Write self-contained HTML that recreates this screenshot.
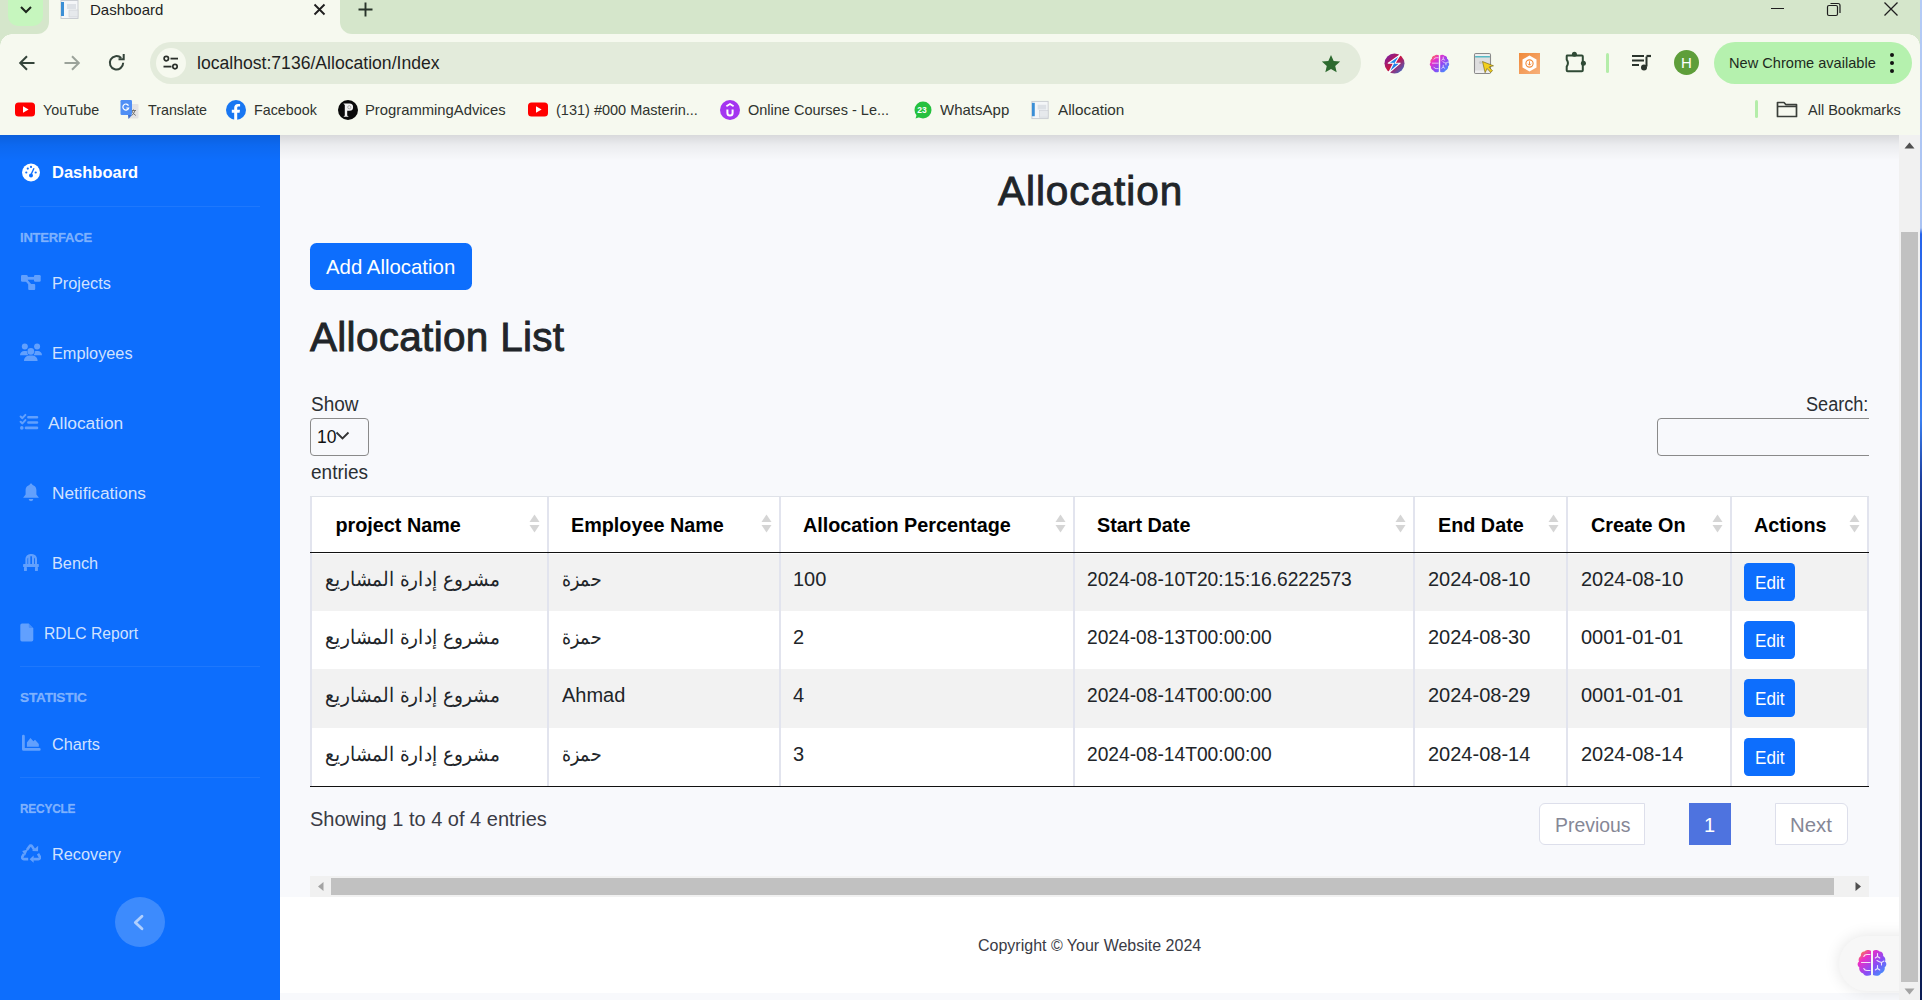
<!DOCTYPE html>
<html><head><meta charset="utf-8"><title>Dashboard</title>
<style>
*{box-sizing:border-box;margin:0;padding:0}
html,body{width:1922px;height:1000px;overflow:hidden;background:linear-gradient(#b4cbf6 0,#a9c2f2 228px,#2563eb 234px,#3b7ff0 420px,#1d3f9e 480px,#0c1f5a 560px,#0c1d55 1000px);font-family:"Liberation Sans",sans-serif}
.a{position:absolute}
.t{position:absolute;line-height:1;white-space:nowrap}
#win{position:absolute;left:0;top:0;width:1920px;height:1000px;overflow:hidden;background:#f8f9fc}
</style></head><body>
<div id="win">
<!-- ===== CHROME ===== -->
<div class="a" style="left:0;top:0;width:1920px;height:135px;background:#f6f9ef"></div>
<div class="a" style="left:0;top:0;width:49px;height:34px;background:#d5e6cb;border-bottom-right-radius:12px"></div>
<div class="a" style="left:340px;top:0;width:1580px;height:34px;background:#d5e6cb;border-bottom-left-radius:12px"></div>
<div class="a" style="left:0;top:34px;width:12px;height:12px;background:radial-gradient(circle at 12px 12px,transparent 11.5px,#d5e6cb 12px)"></div>
<div class="a" style="left:1908px;top:34px;width:12px;height:12px;background:radial-gradient(circle at 0 12px,transparent 11.5px,#d5e6cb 12px)"></div>
<div class="a" style="left:8px;top:-10px;width:35px;height:36px;background:#c6f6be;border-radius:10px"></div>
<svg class="a" style="left:18px;top:4px" width="16" height="12" viewBox="0 0 16 12"><path d="M3 3l5 5 5-5" fill="none" stroke="#1c261c" stroke-width="2"/></svg>
<!-- tab -->
<svg class="a" style="left:59px;top:0px" width="22" height="19" viewBox="0 0 22 19"><rect x="2" y="0.5" width="17" height="18" fill="#f4f6f8" stroke="#c9cdd2"/><rect x="2" y="2" width="3" height="14" fill="#3b8fd6"/><rect x="8" y="4" width="9" height="5" fill="#dde1e6"/><rect x="10" y="10" width="9" height="7" fill="#e6e9ec" stroke="#c9cdd2" stroke-width="0.6"/></svg>
<div class="t" style="left:90px;top:2px;font-size:15px;color:#1f1f1f">Dashboard</div>
<svg class="a" style="left:312px;top:2px" width="15" height="15" viewBox="0 0 15 15"><path d="M2.5 2.5l10 10M12.5 2.5l-10 10" stroke="#1f1f1f" stroke-width="1.9"/></svg>
<svg class="a" style="left:357px;top:1px" width="17" height="17" viewBox="0 0 17 17"><path d="M8.5 1.5v14M1.5 8.5h14" stroke="#28342a" stroke-width="1.9"/></svg>
<!-- window controls -->
<div class="a" style="left:1771px;top:8px;width:12.5px;height:1.4px;background:#1f1f1f"></div>
<svg class="a" style="left:1826px;top:1px" width="16" height="16" viewBox="0 0 16 16"><rect x="1.5" y="4.5" width="10" height="10" rx="1.5" fill="none" stroke="#1f1f1f" stroke-width="1.2"/><path d="M4.5 2.5h7.5a2 2 0 0 1 2 2v7.5" fill="none" stroke="#1f1f1f" stroke-width="1.2"/></svg>
<svg class="a" style="left:1883px;top:1px" width="16" height="16" viewBox="0 0 16 16"><path d="M1.5 1.5l13 13M14.5 1.5l-13 13" stroke="#1f1f1f" stroke-width="1.3"/></svg>
<!-- nav buttons -->
<svg class="a" style="left:17px;top:53px" width="20" height="20" viewBox="0 0 20 20"><path d="M17.5 10H3.5M10 3.2L3.2 10 10 16.8" fill="none" stroke="#34443a" stroke-width="2"/></svg>
<svg class="a" style="left:62px;top:53px" width="20" height="20" viewBox="0 0 20 20"><path d="M2.5 10h14M10 3.2l6.8 6.8L10 16.8" fill="none" stroke="#9ba39a" stroke-width="2"/></svg>
<svg class="a" style="left:107px;top:53px" width="20" height="20" viewBox="0 0 20 20"><path d="M16.2 9.8a6.7 6.7 0 1 1-2-4.8" fill="none" stroke="#34443a" stroke-width="2"/><path d="M11.5 6.2h5.2V1" fill="none" stroke="#34443a" stroke-width="2"/></svg>
<!-- omnibox -->
<div class="a" style="left:150px;top:42px;width:1211px;height:42px;background:#e3ebdb;border-radius:21px"></div>
<div class="a" style="left:156px;top:48px;width:30px;height:30px;background:#f6f9ef;border-radius:50%"></div>
<svg class="a" style="left:162px;top:54px" width="18" height="18" viewBox="0 0 18 18"><circle cx="4.3" cy="4.6" r="2.2" fill="none" stroke="#2a2f2a" stroke-width="1.7"/><path d="M8.5 4.6h7.5" stroke="#2a2f2a" stroke-width="1.8"/><circle cx="13" cy="12.6" r="2.2" fill="none" stroke="#2a2f2a" stroke-width="1.7"/><path d="M1.5 12.6h8" stroke="#2a2f2a" stroke-width="1.8"/></svg>
<div class="t" style="left:197px;top:55px;font-size:17.6px;color:#1f1f1f">localhost:7136/Allocation/Index</div>
<svg class="a" style="left:1320px;top:53px" width="22" height="22" viewBox="0 0 24 24"><path d="M12 2.2l2.9 6.6 7.1.6-5.4 4.7 1.6 7-6.2-3.7-6.2 3.7 1.6-7L2 9.4l7.1-.6z" fill="#2d6a2f"/></svg>
<!-- extension icons -->
<svg class="a" style="left:1384px;top:53px" width="21" height="21" viewBox="0 0 21 21"><defs><linearGradient id="g1" x1="0" y1="0" x2="1" y2="1"><stop offset="0" stop-color="#6a1fb8"/><stop offset=".5" stop-color="#c8183e"/><stop offset=".55" stop-color="#b61a5a"/><stop offset="1" stop-color="#1f7fe0"/></linearGradient><linearGradient id="g1b" x1="0" y1="0" x2="1" y2="1"><stop offset="0" stop-color="#17a4f0"/><stop offset="1" stop-color="#2a5de0"/></linearGradient></defs><circle cx="10.5" cy="10.5" r="10" fill="url(#g1)"/><path d="M16.2 1.8L4.2 10.2h5.3L4.6 20l11.6-9.8h-5.2z" fill="url(#g1b)" stroke="#fff" stroke-width="1.1" stroke-linejoin="round"/></svg>
<svg class="a" style="left:1429px;top:54px" width="21" height="19" viewBox="0 0 30 28"><defs><linearGradient id="g2" x1="0" y1="0" x2="1" y2="1"><stop offset="0" stop-color="#ff9a1a"/><stop offset=".28" stop-color="#ea2fc8"/><stop offset=".6" stop-color="#8a4cf5"/><stop offset="1" stop-color="#2ea4ff"/></linearGradient></defs><path fill="url(#g2)" d="M14 2C12.5 .5 9 .5 7.5 2.5 5 2.5 3.5 4.5 3.8 7 1.5 8.5 1.2 11 2 12.5 0 14 .3 17 2.3 18.2 1.8 21 3.5 23.5 6 24.2 7 26.8 11 27.5 14 26zM16 2C17.5 .5 21 .5 22.5 2.5 25 2.5 26.5 4.5 26.2 7 28.5 8.5 28.8 11 28 12.5 30 14 29.7 17 27.7 18.2 28.2 21 26.5 23.5 24 24.2 23 26.8 19 27.5 16 26z"/><g fill="none" stroke="#fff" stroke-width="1.3" opacity=".75" stroke-linecap="round"><path d="M6.8 7.5Q7.5 5.5 10 5.5H13"/><path d="M4.5 13.5H13"/><path d="M6.8 19.5Q7.5 21.5 10 21.5H13"/><path d="M20.5 4.5V7.5L18.3 9M20.5 7.5L22.8 9"/><path d="M20 11.5Q22.5 13 24.5 13.5L27 12M24.5 13.5V16"/><path d="M20.5 16.5V19.5L18.3 21M20.5 19.5L22.8 21"/></g></svg>
<svg class="a" style="left:1473px;top:52px" width="22" height="23" viewBox="0 0 22 23"><rect x="1.5" y="1.5" width="16" height="20" rx="1.5" fill="#dedede" stroke="#8a8a8a" stroke-width="1.1"/><rect x="2.1" y="2.3" width="14.8" height="1.6" fill="#f2f2f2"/><rect x="2.1" y="4" width="14.8" height="1.5" fill="#56b9c4"/><rect x="2.1" y="18.5" width="14.8" height="2.5" fill="#efefef"/><circle cx="7.5" cy="10.5" r="1.6" fill="#c8c8c8"/><path d="M9.5 9.5l11 4.3-4.6 1.2 3.6 3.8-1.9 1.6-3.5-3.9-2 4.2z" fill="#f2cf1d" stroke="#6a5a12" stroke-width=".6" stroke-linejoin="round"/></svg>
<svg class="a" style="left:1519px;top:53px" width="21" height="21" viewBox="0 0 21 21"><defs><linearGradient id="g3" x1="0" y1="0" x2="1" y2="1"><stop offset="0" stop-color="#f08a3a"/><stop offset="1" stop-color="#f7b07a"/></linearGradient></defs><rect x="0" y="0" width="21" height="21" fill="url(#g3)"/><path d="M10.5 2.5l7 4v8l-7 4-7-4v-8z" fill="#fff"/><circle cx="10.5" cy="10.5" r="3.6" fill="none" stroke="#f08a3a" stroke-width="1.1"/><path d="M10.5 8.3v3.8M9 10.7l1.5 1.5 1.5-1.5" stroke="#f08a3a" stroke-width="1" fill="none"/></svg>
<svg class="a" style="left:1563px;top:50px" width="24" height="24" viewBox="0 0 24 24"><path d="M4.2 5.4h14.6a1 1 0 0 1 1 1v13.9a1 1 0 0 1-1 1H4.7a1 1 0 0 1-1-1V16.6Q6.2 13 3.7 9.6V6.4a1 1 0 0 1 .5-1z" fill="none" stroke="#2f4a35" stroke-width="2" stroke-linejoin="round"/><circle cx="11.4" cy="4.3" r="2.5" fill="#2f4a35"/><circle cx="20.4" cy="13.2" r="2.5" fill="#2f4a35"/></svg>
<div class="a" style="left:1606px;top:53px;width:3px;height:20px;background:#b4eda9;border-radius:2px"></div>
<svg class="a" style="left:1631px;top:53px" width="21" height="20" viewBox="0 0 21 20"><path d="M1 3h12M1 7.5h12M1 12h7" stroke="#2a342c" stroke-width="2"/><path d="M15.5 3.5v10" stroke="#2a342c" stroke-width="2"/><path d="M15.5 3h4.5" stroke="#2a342c" stroke-width="2.2"/><circle cx="13" cy="14.5" r="3" fill="#2a342c"/></svg>
<div class="a" style="left:1674px;top:50px;width:25px;height:25px;background:#5e9e3a;border-radius:50%"></div>
<div class="t" style="left:1681px;top:55px;font-size:15px;color:#fff">H</div>
<div class="a" style="left:1714px;top:42px;width:198px;height:42px;background:#b5f1ae;border-radius:21px"></div>
<div class="t" style="left:1729px;top:56px;font-size:14.6px;color:#1d2a1d">New Chrome available</div>
<div class="a" style="left:1890px;top:53px;width:4px;height:4px;background:#111;border-radius:50%"></div>
<div class="a" style="left:1890px;top:61px;width:4px;height:4px;background:#111;border-radius:50%"></div>
<div class="a" style="left:1890px;top:69px;width:4px;height:4px;background:#111;border-radius:50%"></div>
<!-- bookmarks -->
<svg class="a" style="left:15px;top:102px" width="20" height="15" viewBox="0 0 20 15"><rect x="0" y="0.5" width="20" height="14" rx="3.5" fill="#f00"/><path d="M8 4.2v6.6l5.6-3.3z" fill="#fff"/></svg>
<div class="t" style="left:43px;top:103px;font-size:14.3px;color:#2f332e">YouTube</div>
<svg class="a" style="left:119px;top:99px" width="21" height="21" viewBox="0 0 21 21"><rect x="9" y="5" width="10.5" height="14.5" rx="1" fill="#e3e3e3"/><path d="M12 11.5h5M14.5 10.5v1.2M12.8 11.5q1 3.5 4 5M16 11.5q-.8 3-3.3 5" stroke="#6b6b6b" stroke-width=".9" fill="none"/><rect x="1.5" y="1" width="11.5" height="15" rx="1.2" fill="#4f8ff5"/><path d="M9 16h4l-3.5 4z" fill="#3b6fd0"/><path d="M9.5 6.6a3 3 0 1 0 .2 2.4H7.3" fill="none" stroke="#fff" stroke-width="1.2"/></svg>
<div class="t" style="left:148px;top:103px;font-size:14.3px;color:#2f332e">Translate</div>
<svg class="a" style="left:226px;top:100px" width="20" height="20" viewBox="0 0 20 20"><circle cx="10" cy="10" r="10" fill="#1877f2"/><path d="M11.2 20v-7.3h2.4l.4-2.9h-2.8V8c0-.8.3-1.4 1.4-1.4h1.5V4.1c-.3 0-1.2-.1-2.2-.1-2.2 0-3.7 1.3-3.7 3.8v2h-2.4v2.9h2.4V20z" fill="#fff"/></svg>
<div class="t" style="left:254px;top:103px;font-size:14.3px;color:#2f332e">Facebook</div>
<svg class="a" style="left:338px;top:100px" width="20" height="20" viewBox="0 0 20 20"><circle cx="10" cy="10" r="10" fill="#0a0a0a"/><path d="M5.3 3.6h6.2a3.6 3.6 0 0 1 0 7.2H9.2v4.8l1.6 1.1H5.4l1.4-1.1V5l-1.5-1.4z" fill="#f2f2f2"/><circle cx="11.3" cy="7.2" r="1.6" fill="none" stroke="#888" stroke-width=".6"/></svg>
<div class="t" style="left:365px;top:103px;font-size:14.8px;color:#2f332e">ProgrammingAdvices</div>
<svg class="a" style="left:528px;top:102px" width="20" height="15" viewBox="0 0 20 15"><rect x="0" y="0.5" width="20" height="14" rx="3.5" fill="#f00"/><path d="M8 4.2v6.6l5.6-3.3z" fill="#fff"/></svg>
<div class="t" style="left:556px;top:103px;font-size:14.5px;color:#2f332e">(131) #000 Masterin...</div>
<svg class="a" style="left:720px;top:100px" width="20" height="20" viewBox="0 0 20 20"><circle cx="10" cy="10" r="10" fill="#a435f0"/><path d="M7.4 9.6v3.4a2.6 2.6 0 0 0 5.2 0V9.6" fill="none" stroke="#fff" stroke-width="2"/><path d="M6.4 6.3L10 4l3.6 2.3" fill="none" stroke="#fff" stroke-width="1.8"/></svg>
<div class="t" style="left:748px;top:103px;font-size:14.5px;color:#2f332e">Online Courses - Le...</div>
<svg class="a" style="left:914px;top:101px" width="18" height="18" viewBox="0 0 18 18"><circle cx="9" cy="9" r="8.5" fill="#25c13f"/><path d="M1.5 17.5l1.5-4.5 3 3z" fill="#25c13f"/><text x="3.2" y="12.3" font-size="8.5" font-family="Liberation Sans" fill="#fff" font-weight="700">23</text></svg>
<div class="t" style="left:940px;top:103px;font-size:14.3px;color:#2f332e;transform-origin:0 0;transform:scaleX(1.05)">WhatsApp</div>
<svg class="a" style="left:1030px;top:100px" width="21" height="20" viewBox="0 0 22 19"><rect x="2" y="0.5" width="17" height="18" fill="#f4f6f8" stroke="#c9cdd2"/><rect x="2" y="2" width="3" height="14" fill="#3b8fd6"/><rect x="8" y="4" width="9" height="5" fill="#dde1e6"/><rect x="10" y="10" width="9" height="7" fill="#e6e9ec" stroke="#c9cdd2" stroke-width="0.6"/></svg>
<div class="t" style="left:1058px;top:103px;font-size:14.5px;color:#2f332e;transform-origin:0 0;transform:scaleX(1.055)">Allocation</div>
<div class="a" style="left:1755px;top:100px;width:3px;height:18px;background:#b4eda9;border-radius:2px"></div>
<svg class="a" style="left:1776px;top:100px" width="22" height="18" viewBox="0 0 22 18"><path d="M1.5 2.5h6.5l2 2.2h10.5v11.8H1.5z" fill="none" stroke="#3a3f3a" stroke-width="1.7" stroke-linejoin="round"/><path d="M1.5 6.5h19" stroke="#3a3f3a" stroke-width="1.5"/></svg>
<div class="t" style="left:1808px;top:103px;font-size:14.5px;color:#2f332e">All Bookmarks</div>

<!-- ===== SIDEBAR ===== -->
<div class="a" style="left:0;top:135px;width:280px;height:865px;background:#0d6efd"></div>
<svg class="a" style="left:21px;top:163px" width="20" height="19" viewBox="0 0 20 19"><circle cx="10" cy="9.5" r="9" fill="#fff"/><circle cx="5.3" cy="9.5" r="1.1" fill="#0d6efd"/><circle cx="6.8" cy="5.6" r="1.1" fill="#0d6efd"/><circle cx="10" cy="3.9" r="1.1" fill="#0d6efd"/><circle cx="14.7" cy="9.5" r="1.1" fill="#0d6efd"/><path d="M13 5.2L10.3 11" stroke="#0d6efd" stroke-width="1.4"/><circle cx="10" cy="12.6" r="2" fill="#0d6efd"/></svg>
<div class="t" style="left:52px;top:164px;font-size:16.5px;font-weight:700;color:#fff">Dashboard</div>
<div class="a" style="left:20px;top:206px;width:240px;height:1px;background:rgba(255,255,255,.07)"></div>
<div class="t" style="left:20px;top:231px;font-size:13px;font-weight:700;color:rgba(255,255,255,.45);letter-spacing:-.2px;-webkit-text-stroke:.5px rgba(255,255,255,.2)">INTERFACE</div>
<svg class="a" style="left:20px;top:274px" width="22" height="18" viewBox="0 0 22 18"><g fill="#fff" opacity=".35"><rect x="1" y="1" width="6.7" height="6.8" rx="1.3"/><rect x="14" y="1" width="6.7" height="6.8" rx="1.3"/><rect x="8.2" y="9.9" width="7" height="6.2" rx="1"/><rect x="7" y="2.9" width="7.5" height="2.8"/><path d="M5 6.5L7 5.2 12 11 10 12.5z"/></g></svg>
<div class="t" style="left:52px;top:275px;font-size:16.3px;color:rgba(255,255,255,.82)">Projects</div>
<svg class="a" style="left:19px;top:342px" width="24" height="20" viewBox="0 0 24 20"><g fill="#fff" opacity=".35"><circle cx="5.8" cy="4.5" r="3"/><circle cx="18.1" cy="4.5" r="3"/><circle cx="11.8" cy="9.4" r="3.3"/><path d="M1 13.2a4.2 4.2 0 0 1 4.2-4.2h1.5a4.2 4.2 0 0 1 1.6.3 4.5 4.5 0 0 0 1 3.9z"/><path d="M23 13.2a4.2 4.2 0 0 0-4.2-4.2h-1.5a4.2 4.2 0 0 0-1.6.3 4.5 4.5 0 0 1-1 3.9z"/><path d="M5 19a5 5 0 0 1 5-5.4h3.6a5 5 0 0 1 5 5.4z"/></g></svg>
<div class="t" style="left:52px;top:345px;font-size:16.3px;color:rgba(255,255,255,.82)">Employees</div>
<svg class="a" style="left:19px;top:413px" width="20" height="18" viewBox="0 0 20 18"><g fill="none" stroke="#fff" opacity=".35" stroke-linecap="round" stroke-linejoin="round"><path d="M1.6 3.5l1.8 1.7 3-3.3M1.6 8.7l1.8 1.7 3-3.3" stroke-width="2"/><path d="M9.4 4.3h8.6M9.4 9.5h8.6M7 14.9h11" stroke-width="2.6"/></g><circle cx="2.8" cy="14.9" r="1.8" fill="#fff" opacity=".35"/></svg>
<div class="t" style="left:48px;top:415px;font-size:16.3px;color:rgba(255,255,255,.82);transform-origin:0 0;transform:scaleX(1.065)">Allocation</div>
<svg class="a" style="left:22px;top:483px" width="18" height="19" viewBox="0 0 18 19"><g fill="#fff" opacity=".35"><circle cx="9" cy="1.6" r="1.2"/><path d="M9 1.8c-3 0-5.4 2.4-5.4 5.4v4.2L1.1 14.7h15.8l-2.5-3.3V7.2C14.4 4.2 12 1.8 9 1.8z"/><path d="M6.7 16.1h4.6a2.3 2.1 0 0 1-4.6 0z"/></g></svg>
<div class="t" style="left:52px;top:485px;font-size:16.3px;color:rgba(255,255,255,.82);transform-origin:0 0;transform:scaleX(1.06)">Netifications</div>
<svg class="a" style="left:22px;top:553px" width="18" height="19" viewBox="0 0 18 19"><g fill="#fff" opacity=".35"><path d="M3.4 10.9V6.1A5 5 0 0 1 8.4 1h1.6a5 5 0 0 1 5 5.1v4.8h-2V6.3a2.4 2.4 0 0 0-.9-1.9v6.5H10V3.3H8.3v7.6H6.2V4.4a2.4 2.4 0 0 0-.8 1.9v4.6z"/><rect x="1.1" y="10.9" width="15.7" height="3.1" rx=".6"/><rect x="2" y="14" width="2.9" height="4" rx=".5"/><rect x="13" y="14" width="2.9" height="4" rx=".5"/></g></svg>
<div class="t" style="left:52px;top:555px;font-size:16.3px;color:rgba(255,255,255,.82)">Bench</div>
<svg class="a" style="left:20px;top:623px" width="14" height="19" viewBox="0 0 14 19"><g fill="#fff" opacity=".35"><path d="M2 .5h6.8l4.5 4.6V16.8a1.7 1.7 0 0 1-1.7 1.7H2A1.7 1.7 0 0 1 .3 16.8V2.2A1.7 1.7 0 0 1 2 .5z"/></g><path d="M8.8 .5v3.6a1 1 0 0 0 1 1h3.5" fill="#0d6efd" opacity=".35"/></svg>
<div class="t" style="left:43.5px;top:625px;font-size:16.3px;color:rgba(255,255,255,.82);transform-origin:0 0;transform:scaleX(.963)">RDLC Report</div>
<div class="a" style="left:20px;top:666px;width:240px;height:1px;background:rgba(255,255,255,.07)"></div>
<div class="t" style="left:20px;top:691px;font-size:13px;font-weight:700;color:rgba(255,255,255,.45);letter-spacing:-.2px;-webkit-text-stroke:.5px rgba(255,255,255,.2);transform-origin:0 0;transform:scaleX(1.05)">STATISTIC</div>
<svg class="a" style="left:21px;top:734px" width="20" height="18" viewBox="0 0 20 18"><g fill="#fff" opacity=".35"><path d="M1 2.2a1.4 1.4 0 0 1 2.8 0V14h14.5a1.4 1.4 0 0 1 0 2.8H2.6A1.6 1.6 0 0 1 1 15.2z"/><path d="M5.9 12.8V8.6l3.5-4.5 3 3.2 1.6-1.6 3.8 4.2v2.9z"/></g></svg>
<div class="t" style="left:52px;top:736px;font-size:16.3px;color:rgba(255,255,255,.82)">Charts</div>
<div class="a" style="left:20px;top:777px;width:240px;height:1px;background:rgba(255,255,255,.07)"></div>
<div class="t" style="left:20px;top:802px;font-size:13px;font-weight:700;color:rgba(255,255,255,.45);letter-spacing:-.2px;-webkit-text-stroke:.5px rgba(255,255,255,.2);transform-origin:0 0;transform:scaleX(.91)">RECYCLE</div>
<svg class="a" style="left:21px;top:844px" width="20" height="19" viewBox="0 0 20 19"><g opacity=".35"><g fill="none" stroke="#fff" stroke-width="2.6" stroke-linejoin="round"><path d="M5.9 5.9L8.4 2.4a1.6 1.6 0 0 1 2.7 0l2 3.3"/><path d="M17 9.8l1.8 2.9a1.6 1.6 0 0 1-1.4 2.4h-5.2"/><path d="M7.2 15.1H2.8a1.6 1.6 0 0 1-1.4-2.4l1.6-2.8"/></g><g fill="#fff"><path d="M11 6.9l6 .4.2-5.6z"/><path d="M12.6 11.6l-4 3.6 4 3.6z"/><path d="M6.8 5.6L1.2 6.9l3 4.6z"/></g></g></svg>
<div class="t" style="left:52px;top:846px;font-size:16.3px;color:rgba(255,255,255,.82)">Recovery</div>
<div class="a" style="left:115px;top:897px;width:50px;height:50px;background:rgba(255,255,255,.2);border-radius:50%"></div>
<svg class="a" style="left:130px;top:912px" width="18" height="20" viewBox="0 0 18 20"><path d="M12 4.2L5.3 10.5 12 16.8" fill="none" stroke="#fff" opacity=".6" stroke-width="2.8" stroke-linecap="round" stroke-linejoin="round"/></svg>


<!-- ===== MAIN ===== -->
<div class="t" style="left:998px;top:171px;font-size:40.5px;font-weight:400;color:#212529;-webkit-text-stroke:.9px #212529;letter-spacing:.95px">Allocation</div>
<div class="a" style="left:310px;top:243px;width:162px;height:47px;background:#0d6efd;border-radius:6.5px"></div>
<div class="t" style="left:326px;top:257px;font-size:20.4px;color:#fff">Add Allocation</div>
<div class="t" style="left:310px;top:316.5px;font-size:40.5px;font-weight:400;color:#212529;-webkit-text-stroke:.9px #212529;letter-spacing:.3px">Allocation List</div>
<div class="t" style="left:310.5px;top:393.5px;font-size:20px;color:#2b2f33;transform-origin:0 0;transform:scaleX(.95)">Show</div>
<div class="a" style="left:310px;top:418px;width:59px;height:38px;border:1px solid #8a8a8a;border-radius:4px;background:#f8f9fc"></div>
<div class="t" style="left:317px;top:429px;font-size:17.5px;color:#111">10</div>
<svg class="a" style="left:335px;top:430px" width="15" height="11" viewBox="0 0 15 11"><path d="M1.5 2.5l6 6 6-6" fill="none" stroke="#333" stroke-width="1.8"/></svg>
<div class="t" style="left:310.5px;top:461.5px;font-size:20px;color:#2b2f33;transform-origin:0 0;transform:scaleX(.95)">entries</div>
<div class="t" style="left:1806px;top:393.5px;font-size:20px;color:#2b2f33;transform-origin:0 0;transform:scaleX(.905)">Search:</div>
<div class="a" style="left:1657px;top:418px;width:230px;height:38px;border:1px solid #8a8a8a;border-radius:4px;background:#f8f9fc"></div>
<div class="a" style="left:1869px;top:410px;width:30px;height:60px;background:#f8f9fc"></div>
<div class="a" style="left:310px;top:496px;width:1559px;height:57px;background:#fff;border-top:1px solid #dfe2e8"></div>
<div class="a" style="left:310px;top:553px;width:1559px;height:234px;background:#fff"></div>
<div class="a" style="left:312px;top:554px;width:1555px;height:57px;background:#f2f2f2"></div>
<div class="a" style="left:312px;top:669px;width:1555px;height:59px;background:#f2f2f2"></div>
<div class="a" style="left:310px;top:497px;width:2px;height:290px;background:#e2e4ee"></div>
<div class="a" style="left:547px;top:497px;width:2px;height:290px;background:#e2e4ee"></div>
<div class="a" style="left:779px;top:497px;width:2px;height:290px;background:#e2e4ee"></div>
<div class="a" style="left:1073px;top:497px;width:2px;height:290px;background:#e2e4ee"></div>
<div class="a" style="left:1413px;top:497px;width:2px;height:290px;background:#e2e4ee"></div>
<div class="a" style="left:1566px;top:497px;width:2px;height:290px;background:#e2e4ee"></div>
<div class="a" style="left:1730px;top:497px;width:2px;height:290px;background:#e2e4ee"></div>
<div class="a" style="left:1867px;top:497px;width:2px;height:290px;background:#e2e4ee"></div>
<div class="a" style="left:310px;top:552px;width:1559px;height:1px;background:#111"></div>
<div class="a" style="left:310px;top:786px;width:1559px;height:1px;background:#111"></div>
<div class="t" style="left:335.5px;top:515.5px;font-size:19.8px;font-weight:700;color:#000">project Name</div>
<svg class="a" style="left:529px;top:514px" width="11" height="19" viewBox="0 0 11 19"><path d="M5.5 0.5L10.5 8H0.5z" fill="#d5d5d5"/><path d="M5.5 18.5L10.5 11H0.5z" fill="#d5d5d5"/></svg>
<div class="t" style="left:571px;top:515.5px;font-size:19.8px;font-weight:700;color:#000">Employee Name</div>
<svg class="a" style="left:761px;top:514px" width="11" height="19" viewBox="0 0 11 19"><path d="M5.5 0.5L10.5 8H0.5z" fill="#d5d5d5"/><path d="M5.5 18.5L10.5 11H0.5z" fill="#d5d5d5"/></svg>
<div class="t" style="left:803px;top:515.5px;font-size:19.8px;font-weight:700;color:#000">Allocation Percentage</div>
<svg class="a" style="left:1055px;top:514px" width="11" height="19" viewBox="0 0 11 19"><path d="M5.5 0.5L10.5 8H0.5z" fill="#d5d5d5"/><path d="M5.5 18.5L10.5 11H0.5z" fill="#d5d5d5"/></svg>
<div class="t" style="left:1097px;top:515.5px;font-size:19.8px;font-weight:700;color:#000">Start Date</div>
<svg class="a" style="left:1395px;top:514px" width="11" height="19" viewBox="0 0 11 19"><path d="M5.5 0.5L10.5 8H0.5z" fill="#d5d5d5"/><path d="M5.5 18.5L10.5 11H0.5z" fill="#d5d5d5"/></svg>
<div class="t" style="left:1438px;top:515.5px;font-size:19.8px;font-weight:700;color:#000">End Date</div>
<svg class="a" style="left:1548px;top:514px" width="11" height="19" viewBox="0 0 11 19"><path d="M5.5 0.5L10.5 8H0.5z" fill="#d5d5d5"/><path d="M5.5 18.5L10.5 11H0.5z" fill="#d5d5d5"/></svg>
<div class="t" style="left:1591px;top:515.5px;font-size:19.8px;font-weight:700;color:#000">Create On</div>
<svg class="a" style="left:1712px;top:514px" width="11" height="19" viewBox="0 0 11 19"><path d="M5.5 0.5L10.5 8H0.5z" fill="#d5d5d5"/><path d="M5.5 18.5L10.5 11H0.5z" fill="#d5d5d5"/></svg>
<div class="t" style="left:1754px;top:515.5px;font-size:19.8px;font-weight:700;color:#000">Actions</div>
<svg class="a" style="left:1849px;top:514px" width="11" height="19" viewBox="0 0 11 19"><path d="M5.5 0.5L10.5 8H0.5z" fill="#d5d5d5"/><path d="M5.5 18.5L10.5 11H0.5z" fill="#d5d5d5"/></svg>
<div class="t" style="left:325px;top:569px;font-size:20px;color:#212529;transform-origin:0 0;transform:scaleX(.925)">مشروع إدارة المشاريع</div>
<div class="t" style="left:562px;top:569px;font-size:20px;color:#212529;transform-origin:0 0;transform:scaleX(.865)">حمزة</div>
<div class="t" style="left:793px;top:569px;font-size:20px;color:#212529">100</div>
<div class="t" style="left:1087px;top:569px;font-size:20px;color:#212529;transform-origin:0 0;transform:scaleX(.96)">2024-08-10T20:15:16.6222573</div>
<div class="t" style="left:1428px;top:569px;font-size:20px;color:#212529">2024-08-10</div>
<div class="t" style="left:1581px;top:569px;font-size:20px;color:#212529">2024-08-10</div>
<div class="a" style="left:1744px;top:563px;width:51px;height:38px;background:#0d6efd;border-radius:4.5px"></div>
<div class="t" style="left:1755px;top:572.5px;font-size:19px;color:#fff;transform-origin:0 0;transform:scaleX(.9)">Edit</div>
<div class="t" style="left:325px;top:627px;font-size:20px;color:#212529;transform-origin:0 0;transform:scaleX(.925)">مشروع إدارة المشاريع</div>
<div class="t" style="left:562px;top:627px;font-size:20px;color:#212529;transform-origin:0 0;transform:scaleX(.865)">حمزة</div>
<div class="t" style="left:793px;top:627px;font-size:20px;color:#212529">2</div>
<div class="t" style="left:1087px;top:627px;font-size:20px;color:#212529;transform-origin:0 0;transform:scaleX(.96)">2024-08-13T00:00:00</div>
<div class="t" style="left:1428px;top:627px;font-size:20px;color:#212529">2024-08-30</div>
<div class="t" style="left:1581px;top:627px;font-size:20px;color:#212529">0001-01-01</div>
<div class="a" style="left:1744px;top:621px;width:51px;height:38px;background:#0d6efd;border-radius:4.5px"></div>
<div class="t" style="left:1755px;top:630.5px;font-size:19px;color:#fff;transform-origin:0 0;transform:scaleX(.9)">Edit</div>
<div class="t" style="left:325px;top:685px;font-size:20px;color:#212529;transform-origin:0 0;transform:scaleX(.925)">مشروع إدارة المشاريع</div>
<div class="t" style="left:562px;top:685px;font-size:20px;color:#212529">Ahmad</div>
<div class="t" style="left:793px;top:685px;font-size:20px;color:#212529">4</div>
<div class="t" style="left:1087px;top:685px;font-size:20px;color:#212529;transform-origin:0 0;transform:scaleX(.96)">2024-08-14T00:00:00</div>
<div class="t" style="left:1428px;top:685px;font-size:20px;color:#212529">2024-08-29</div>
<div class="t" style="left:1581px;top:685px;font-size:20px;color:#212529">0001-01-01</div>
<div class="a" style="left:1744px;top:679px;width:51px;height:38px;background:#0d6efd;border-radius:4.5px"></div>
<div class="t" style="left:1755px;top:688.5px;font-size:19px;color:#fff;transform-origin:0 0;transform:scaleX(.9)">Edit</div>
<div class="t" style="left:325px;top:744px;font-size:20px;color:#212529;transform-origin:0 0;transform:scaleX(.925)">مشروع إدارة المشاريع</div>
<div class="t" style="left:562px;top:744px;font-size:20px;color:#212529;transform-origin:0 0;transform:scaleX(.865)">حمزة</div>
<div class="t" style="left:793px;top:744px;font-size:20px;color:#212529">3</div>
<div class="t" style="left:1087px;top:744px;font-size:20px;color:#212529;transform-origin:0 0;transform:scaleX(.96)">2024-08-14T00:00:00</div>
<div class="t" style="left:1428px;top:744px;font-size:20px;color:#212529">2024-08-14</div>
<div class="t" style="left:1581px;top:744px;font-size:20px;color:#212529">2024-08-14</div>
<div class="a" style="left:1744px;top:738px;width:51px;height:38px;background:#0d6efd;border-radius:4.5px"></div>
<div class="t" style="left:1755px;top:747.5px;font-size:19px;color:#fff;transform-origin:0 0;transform:scaleX(.9)">Edit</div>
<div class="t" style="left:310px;top:809px;font-size:20px;color:#3a3b45">Showing 1 to 4 of 4 entries</div>
<div class="a" style="left:1539px;top:803px;width:106px;height:42px;background:#fff;border:1px solid #dddfeb;border-radius:6px 0 0 6px"></div>
<div class="t" style="left:1555px;top:815px;font-size:20px;color:#858796;transform-origin:0 0;transform:scaleX(.97)">Previous</div>
<div class="a" style="left:1689px;top:803px;width:42px;height:42px;background:#4e73df"></div>
<div class="t" style="left:1704px;top:815px;font-size:20px;color:#fff">1</div>
<div class="a" style="left:1775px;top:803px;width:73px;height:42px;background:#fff;border:1px solid #dddfeb;border-radius:0 6px 6px 0"></div>
<div class="t" style="left:1790px;top:815px;font-size:20px;color:#858796;transform-origin:0 0;transform:scaleX(1.02)">Next</div>
<!-- h scrollbar -->
<div class="a" style="left:310px;top:876px;width:1559px;height:21px;background:#f1f1f1"></div>
<div class="a" style="left:331px;top:878px;width:1503px;height:17px;background:#c1c1c1"></div>
<svg class="a" style="left:316px;top:881px" width="10" height="11" viewBox="0 0 10 11"><path d="M2 5.5L7.5 1v9z" fill="#a3a3a3"/></svg>
<svg class="a" style="left:1853px;top:881px" width="10" height="11" viewBox="0 0 10 11"><path d="M8 5.5L2.5 1v9z" fill="#505050"/></svg>
<!-- footer -->
<div class="a" style="left:280px;top:897px;width:1620px;height:96px;background:#fff"></div>
<div class="t" style="left:978px;top:938px;font-size:16px;color:#3a3b45;transform-origin:0 0;transform:scaleX(1.0)">Copyright © Your Website 2024</div>
<!-- brain widget -->
<div class="a" style="left:1839px;top:935.5px;width:80px;height:55px;background:#f7f7f7;border-radius:28px 0 0 28px;box-shadow:0 0 16px rgba(0,0,0,.11)"></div>
<svg class="a" style="left:1857px;top:948.5px" width="30" height="28" viewBox="0 0 30 28"><defs><linearGradient id="g4" x1="0" y1="0" x2="1" y2="1"><stop offset="0" stop-color="#ff9a1a"/><stop offset=".28" stop-color="#ea2fc8"/><stop offset=".6" stop-color="#8a4cf5"/><stop offset="1" stop-color="#2ea4ff"/></linearGradient></defs><path fill="url(#g4)" d="M14 2C12.5 .5 9 .5 7.5 2.5 5 2.5 3.5 4.5 3.8 7 1.5 8.5 1.2 11 2 12.5 0 14 .3 17 2.3 18.2 1.8 21 3.5 23.5 6 24.2 7 26.8 11 27.5 14 26zM16 2C17.5 .5 21 .5 22.5 2.5 25 2.5 26.5 4.5 26.2 7 28.5 8.5 28.8 11 28 12.5 30 14 29.7 17 27.7 18.2 28.2 21 26.5 23.5 24 24.2 23 26.8 19 27.5 16 26z"/><g fill="none" stroke="#fff" stroke-width="1.1" opacity=".85" stroke-linecap="round"><path d="M6.8 7.5Q7.5 5.5 10 5.5H13"/><path d="M4.5 13.5H13"/><path d="M6.8 19.5Q7.5 21.5 10 21.5H13"/><path d="M20.5 4.5V7.5L18.3 9M20.5 7.5L22.8 9"/><path d="M20 11.5Q22.5 13 24.5 13.5L27 12M24.5 13.5V16"/><path d="M20.5 16.5V19.5L18.3 21M20.5 19.5L22.8 21"/></g></svg>
<!-- page scrollbar -->
<div class="a" style="left:1899px;top:135px;width:21px;height:865px;background:#f1f1f1"></div>
<div class="a" style="left:1901px;top:232px;width:17px;height:750px;background:#c1c1c1"></div>
<svg class="a" style="left:1903px;top:141px" width="13" height="9" viewBox="0 0 13 9"><path d="M6.5 1.5L11.5 7.5h-10z" fill="#505050"/></svg>
<svg class="a" style="left:1903px;top:987px" width="13" height="9" viewBox="0 0 13 9"><path d="M6.5 7.5L11.5 1.5h-10z" fill="#a3a3a3"/></svg>
<!-- toolbar shadow -->
<div class="a" style="left:0;top:135px;width:1899px;height:26px;background:linear-gradient(rgba(0,0,0,.13),rgba(0,0,0,.05) 40%,rgba(0,0,0,0))"></div>

</div>
</body></html>
